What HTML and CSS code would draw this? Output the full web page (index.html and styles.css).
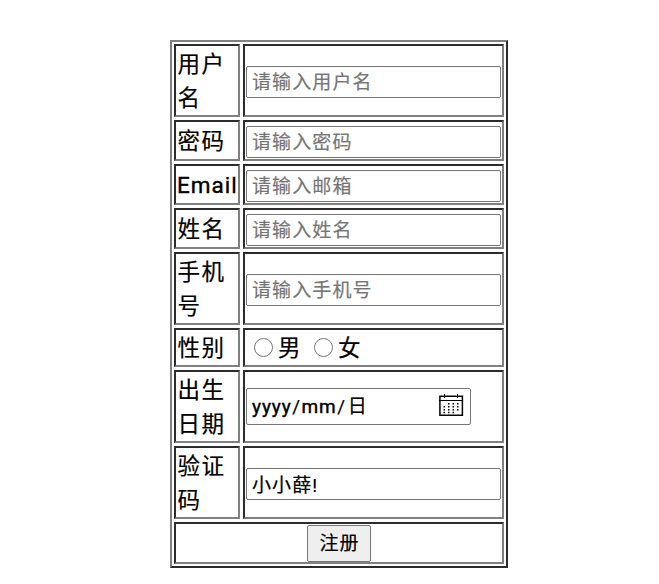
FILE: index.html
```html
<!DOCTYPE html>
<html lang="zh-CN">
<head>
<meta charset="utf-8">
<title>注册</title>
<link rel="stylesheet" href="styles.css">
</head>
<body>
<form class="register">
  <div class="cell label">用户<br>名</div>
  <div class="cell tall"><input class="field" type="text" placeholder="请输入用户名"></div>
  <div class="cell label">密码</div>
  <div class="cell short"><input class="field" type="password" placeholder="请输入密码"></div>
  <div class="cell label email"><span class="latin">Email</span></div>
  <div class="cell short"><input class="field" type="text" placeholder="请输入邮箱"></div>
  <div class="cell label">姓名</div>
  <div class="cell short"><input class="field" type="text" placeholder="请输入姓名"></div>
  <div class="cell label">手机<br>号</div>
  <div class="cell tall"><input class="field" type="text" placeholder="请输入手机号"></div>
  <div class="cell label">性别</div>
  <div class="cell gender">
    <label class="option"><input class="radio" type="radio" name="gender">男</label>
    <label class="option"><input class="radio" type="radio" name="gender">女</label>
  </div>
  <div class="cell label">出生<br>日期</div>
  <div class="cell">
    <div class="date"><span class="date-text"><span class="year">yyyy</span><span class="slash">/</span><span class="month">mm</span><span class="slash">/</span><span class="day">日</span></span>
      <svg class="calendar" width="25" height="24" viewBox="0 0 25 24">
        <path fill="none" stroke="#000" stroke-width="1.5" d="M.9 3.2h22.5v19H.9z"/>
        <path fill="none" stroke="#000" d="M0 7.5h24M5.5 1v4M18.5 1v4"/>
        <path fill="none" stroke="#000" stroke-width="1.5" stroke-dasharray="1.5 3" d="M9 10.7h11M4.5 13.7h16M4.5 16.7h16M4.5 19.5h11"/>
      </svg>
    </div>
  </div>
  <div class="cell label">验证<br>码</div>
  <div class="cell captcha"><input class="field filled" type="text" value="小小薛!"></div>
  <div class="cell submit"><button class="button" type="button">注册</button></div>
</form>
</body>
</html>
```
FILE: styles.css
```css
* { box-sizing: border-box; }
body {
  margin: 0;
  background: #fff;
  color: #000;
  font-family: Roboto, "Noto Sans CJK SC", sans-serif;
  font-size: 22.5px;
  letter-spacing: 1.5px;
  line-height: 34px;
  -webkit-text-stroke: .2px currentColor;
}
.register {
  display: grid;
  grid-template-columns: 66px 261px;
  grid-template-rows: 73px 41px 41px 41px 73px 39px 73px 73px 42px;
  gap: 3px;
  width: 338px;
  margin: 40px 0 0 170px;
  padding: 2px;
  border: 2px solid;
  border-color: #808080 #2c2c2c #2c2c2c #808080;
}
.cell {
  display: flex;
  align-items: center;
  padding: 1px;
  border: 2px solid;
  border-color: #2c2c2c #808080 #808080 #2c2c2c;
  white-space: nowrap;
}
.label { padding-left: 1.5px; }
.email { padding-left: 1px; }
.tall { padding-top: 3px; }
.short { padding-top: 3px; }
.captcha { padding-top: 3px; }
.latin { letter-spacing: 1px; -webkit-text-stroke-width: .4px; }
.field {
  width: 255px;
  height: 32px;
  margin: 0;
  padding: 1px 5px 0;
  border: 1px solid #767676;
  border-radius: 2px;
  background: #fff;
  color: #000;
  font: 19px/28px Roboto, "Noto Sans CJK SC", sans-serif;
  letter-spacing: 1.1px;
}
.filled { padding: 0 5px 1px; }
.field::placeholder { color: #757575; }
.gender { gap: 12px; padding-left: 9px; }
.option { display: flex; align-items: center; }
.radio {
  appearance: none;
  width: 19px;
  height: 19px;
  margin: 0 5px 0 0;
  border: 1px solid #767676;
  border-radius: 50%;
}
.date {
  display: flex;
  align-items: center;
  justify-content: space-between;
  width: 225px;
  height: 37px;
  padding: 0 6px 0 5px;
  border: 1px solid #767676;
  border-radius: 2px;
  font-size: 19px;
}
.date-text { display: flex; padding-top: 1px; letter-spacing: .9px; -webkit-text-stroke-width: .4px; }
.slash { width: 10px; text-align: center; -webkit-text-stroke-width: .2px; }
.day { margin-left: 1px; -webkit-text-stroke-width: .2px; }
.calendar { margin-bottom: 3px; }
.submit { grid-column: 1 / 3; justify-content: center; }
.button {
  width: 64px;
  height: 37px;
  padding: 2px 0 0 1px;
  border: 1px solid #767676;
  border-radius: 2px;
  background: #efefef;
  color: #000;
  font: 19px/28px Roboto, "Noto Sans CJK SC", sans-serif;
  letter-spacing: 1px;
}
```
